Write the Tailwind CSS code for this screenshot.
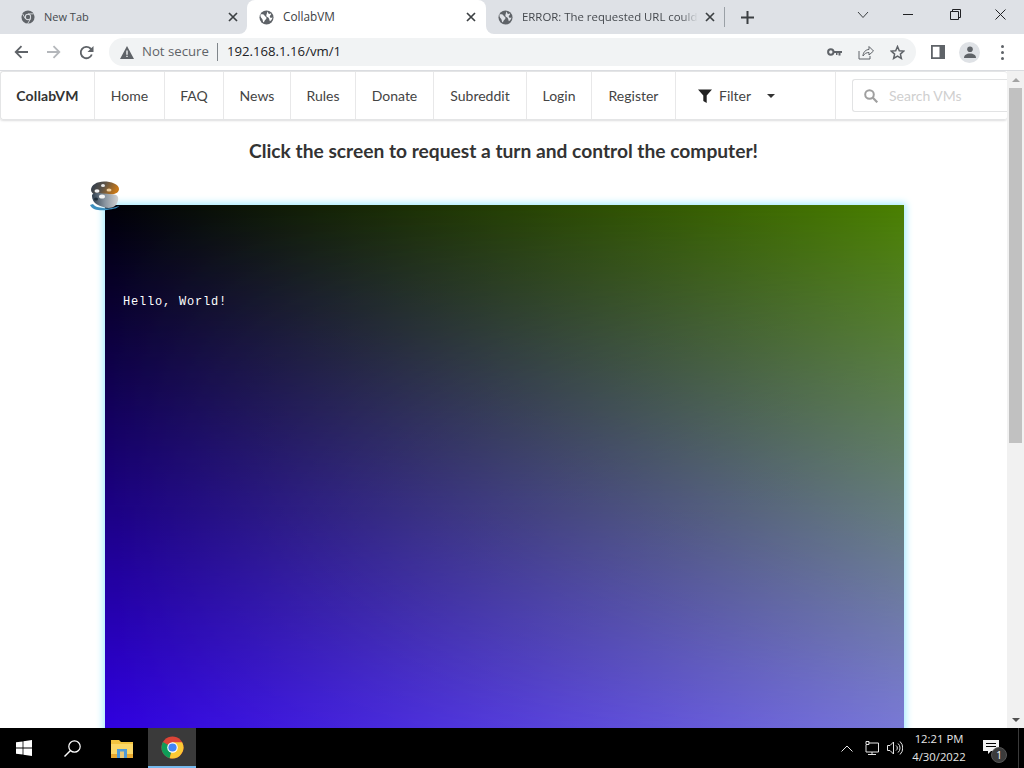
<!doctype html>
<html lang="en">
<head>
<meta charset="utf-8">
<title>CollabVM</title>
<script src="https://cdn.jsdelivr.net/npm/@tailwindcss/browser@4"></script>
</head>
<body class="m-0 overflow-hidden bg-white">
<div class="flex h-[768px] w-[1024px] flex-col overflow-hidden font-['Open_Sans',sans-serif]">

  <!-- Tab strip -->
  <div class="flex h-[34px] shrink-0 items-center bg-[#dee1e6] text-[#45494e]">
    <div class="flex h-full w-[247px] items-center pl-[21px] pr-[9px]">
      <svg class="h-[14px] w-[14px] shrink-0" viewBox="0 0 16 16"><circle cx="8" cy="8" r="7.5" fill="#5f6368"/><circle cx="8" cy="8" r="3.6" fill="#dee1e6"/><circle cx="8" cy="8" r="2.5" fill="#5f6368"/><path d="M8 4.4h6.6M5 10l-3.2-5.6M11 10l-3.4 5.6" stroke="#dee1e6" stroke-width="1"/></svg>
      <span class="ml-[9px] flex-1 text-[11px]">New Tab</span>
      <svg class="h-[10px] w-[10px]" viewBox="0 0 10 10"><path d="M1 1l8 8M9 1l-8 8" stroke="#3c4043" stroke-width="1.7"/></svg>
    </div>
    <div class="relative flex h-[34px] w-[239px] items-center self-end rounded-t-[8px] bg-white pl-[12px] pr-[10px] text-[#3c4043]">
      <div class="absolute bottom-0 -left-[8px] h-[8px] w-[8px] bg-white"><div class="h-full w-full rounded-br-[8px] bg-[#dee1e6]"></div></div>
      <div class="absolute -right-[8px] bottom-0 h-[8px] w-[8px] bg-white"><div class="h-full w-full rounded-bl-[8px] bg-[#dee1e6]"></div></div>
      <svg class="h-[15px] w-[15px] shrink-0" viewBox="0 0 16 16"><circle cx="8" cy="8" r="7.5" fill="#5f6368"/><path d="M2.5 4.5c2 0 3 .5 3.5 1.500s2 1 2 2.500-1.500 1.500-2 3-1 1.500-1.500 1.500c-.5-1.500-.5-3-1.500-4s-1.500-2-1.500-4.500zM9 1.500c1 1 .5 2 1.500 2.500s1.500-.5 2.500 0c0 1.500-1.500 1.500-1.500 3s1.500 1.500 3 1c-.5 2-2 3.500-3 4-.5-2-.5-3.500-2.500-4.500S8 5 9 1.500z" fill="#fff"/></svg>
      <span class="ml-[9px] flex-1 text-[11.8px]">CollabVM</span>
      <svg class="h-[10px] w-[10px]" viewBox="0 0 10 10"><path d="M1 1l8 8M9 1l-8 8" stroke="#3c4043" stroke-width="1.7"/></svg>
    </div>
    <div class="flex h-full w-[238px] items-center pl-[12px] pr-[1px]">
      <svg class="h-[15px] w-[15px] shrink-0" viewBox="0 0 16 16"><circle cx="8" cy="8" r="7.5" fill="#5f6368"/><path d="M2.5 4.5c2 0 3 .5 3.500 1.500s2 1 2 2.500-1.500 1.500-2 3-1 1.500-1.500 1.500c-.5-1.500-.5-3-1.500-4s-1.500-2-1.500-4.500zM9 1.500c1 1 .5 2 1.500 2.500s1.500-.5 2.500 0c0 1.500-1.500 1.500-1.500 3s1.500 1.500 3 1c-.5 2-2 3.500-3 4-.5-2-.5-3.500-2.500-4.500S8 5 9 1.500z" fill="#dee1e6"/></svg>
      <span class="ml-[9px] w-[176px] text-[11.4px] whitespace-nowrap [mask-image:linear-gradient(to_right,black_90%,transparent)]">ERROR: The requested URL could</span>
      <svg class="ml-[7px] h-[10px] w-[10px] shrink-0" viewBox="0 0 10 10"><path d="M1 1l8 8M9 1l-8 8" stroke="#3c4043" stroke-width="1.7"/></svg>
    </div>
    <div class="h-[20px] w-px bg-[#9aa0a6]"></div>
    <svg class="ml-[16px] h-[13px] w-[13px]" viewBox="0 0 13 13"><path d="M6.500 0v13M0 6.500h13" stroke="#3c4043" stroke-width="2"/></svg>
    <svg class="ml-[103px] -mt-[5px] h-[8px] w-[12px]" viewBox="0 0 12 8"><path d="M1 1l5 5.500L11 1" fill="none" stroke="#3c4043" stroke-width="1"/></svg>
    <div class="ml-[34px] -mt-[5px] h-px w-[10px] bg-[#202124]"></div>
    <svg class="ml-[37px] -mt-[5px] h-[11px] w-[11px]" viewBox="0 0 11 11"><path d="M.5 2.500h8v8h-8zM2.500 2.500v-2h8v8h-2" fill="none" stroke="#202124" stroke-width="1"/></svg>
    <svg class="ml-[34px] -mt-[5px] h-[11px] w-[11px]" viewBox="0 0 11 11"><path d="M.5.500l10 10M10.500.500l-10 10" stroke="#202124" stroke-width="1"/></svg>
  </div>

  <!-- Toolbar -->
  <div class="flex h-[37px] shrink-0 items-center border-b border-[#dadce0] bg-white">
    <svg class="ml-[14px] h-[14px] w-[14px]" viewBox="0 0 14 14"><path d="M14 7H2M7.500 1.200L1.700 7l5.800 5.800" fill="none" stroke="#5f6368" stroke-width="1.800"/></svg>
    <svg class="ml-[19px] h-[14px] w-[14px]" viewBox="0 0 14 14"><path d="M0 7h12M6.500 1.200L12.300 7l-5.800 5.800" fill="none" stroke="#b4b7bb" stroke-width="1.800"/></svg>
    <svg class="ml-[18px] h-[15px] w-[15px]" viewBox="0 0 15 15"><path d="M12.800 9.500A5.700 5.700 0 1 1 11.500 3.500L13.500 5.500" fill="none" stroke="#5f6368" stroke-width="1.800"/><path d="M14.500 1v6h-6z" fill="#5f6368"/></svg>
    <div class="ml-[15px] flex h-[28px] w-[807px] items-center rounded-full bg-[#f1f3f4] pl-[11px] text-[#5f6368]">
      <svg class="h-[13px] w-[14px]" viewBox="0 0 14 13"><path fill-rule="evenodd" d="M7 0l7 13H0zM6.300 4.500v4.200h1.400V4.500zM6.300 9.700v1.400h1.400V9.700z" fill="#5f6368"/></svg>
      <span class="ml-[8px] text-[13.2px]">Not secure</span>
      <div class="ml-[8px] h-[18px] w-px bg-[#80868b]"></div>
      <span class="ml-[9px] text-[13.2px] text-[#202124]">192.168.1.16/vm/1</span>
      <div class="ml-auto flex items-center pr-[11px]">
        <svg class="h-[9px] w-[15px]" viewBox="0 0 15 9"><circle cx="3.800" cy="4" r="2.700" fill="none" stroke="#5f6368" stroke-width="2"/><path d="M6 3h9v2h-1.500v2.500h-2V5h-1v2H9V5H6z" fill="#5f6368"/></svg>
        <svg class="ml-[16px] h-[16px] w-[16px]" viewBox="0 0 16 16"><path d="M1 7v8h11v-3" fill="none" stroke="#5f6368" stroke-width="1"/><path d="M5 12c0-4 3-6.500 6-6.500V2.500l4.500 4.500L11 11V8.500c-2.500 0-4.500 1-6 3.500z" fill="none" stroke="#5f6368" stroke-width="1"/></svg>
        <svg class="ml-[16px] h-[15px] w-[15px]" viewBox="0 0 15 15"><path d="M7.500 1.500l1.800 4.200 4.500.4-3.400 3 1 4.400-3.900-2.300-3.900 2.300 1-4.400-3.400-3 4.500-.4z" fill="none" stroke="#5f6368" stroke-width="1.500"/></svg>
      </div>
    </div>
    <svg class="ml-[15px] h-[14px] w-[14px]" viewBox="0 0 14 14"><path fill-rule="evenodd" d="M0 0h14v14H0zM1.800 1.800v10.400H8.500V1.800z" fill="#5f6368"/></svg>
    <div class="ml-[14px] flex h-[21px] w-[21px] items-center justify-center rounded-full bg-[#dfe2e6]">
      <svg class="h-[12px] w-[12px]" viewBox="0 0 12 12"><circle cx="6" cy="3.200" r="2.800" fill="#5f6368"/><path d="M0 12c0-3 2.500-4.500 6-4.500s6 1.500 6 4.500z" fill="#5f6368"/></svg>
    </div>
    <div class="ml-[21px] flex flex-col gap-[3px]">
      <div class="h-[3px] w-[3px] rounded-full bg-[#5f6368]"></div>
      <div class="h-[3px] w-[3px] rounded-full bg-[#5f6368]"></div>
      <div class="h-[3px] w-[3px] rounded-full bg-[#5f6368]"></div>
    </div>
  </div>

  <!-- Viewport -->
  <div class="flex min-h-0 flex-1">
    <main class="min-w-0 flex-1 overflow-hidden bg-white font-['Lato',sans-serif] text-[#444]">
      <nav class="flex h-[49px] items-stretch rounded-[3px] border-y border-l border-[#e4e5e6] text-[14px] shadow-[0_1px_2px_rgba(34,36,38,0.15)]">
        <a class="flex w-[94px] items-center justify-center border-r border-[#e8e8e9] tracking-[0.15px] font-bold text-[#333]">CollabVM</a>
        <a class="flex w-[70px] items-center justify-center border-r border-[#e8e8e9]">Home</a>
        <a class="flex w-[59px] items-center justify-center border-r border-[#e8e8e9]">FAQ</a>
        <a class="flex w-[67px] items-center justify-center border-r border-[#e8e8e9]">News</a>
        <a class="flex w-[65px] items-center justify-center border-r border-[#e8e8e9]">Rules</a>
        <a class="flex w-[78px] items-center justify-center border-r border-[#e8e8e9]">Donate</a>
        <a class="flex w-[93px] items-center justify-center border-r border-[#e8e8e9]">Subreddit</a>
        <a class="flex w-[65px] items-center justify-center border-r border-[#e8e8e9]">Login</a>
        <a class="flex w-[84px] items-center justify-center border-r border-[#e8e8e9]">Register</a>
        <div class="flex w-[160px] items-center border-r border-[#e8e8e9] pl-[22px]">
          <svg class="h-[14px] w-[14px]" viewBox="0 0 14 14"><path d="M0 .500h14L8.700 6.500V14l-3.400-2V6.500z" fill="#222"/></svg>
          <span class="ml-[7px]">Filter</span>
          <svg class="ml-[16px] h-[4px] w-[8px]" viewBox="0 0 8 4"><path d="M0 0h8L4 4z" fill="#333"/></svg>
        </div>
        <div class="ml-[16px] flex h-[33px] flex-1 items-center self-center rounded-l-[3px] border-y border-l border-[#e2e3e4] pl-[11px] text-[#cfcfcf]">
          <svg class="h-[14px] w-[14px]" viewBox="0 0 14 14"><circle cx="5.500" cy="5.500" r="4.300" fill="none" stroke="#9f9f9f" stroke-width="2"/><path d="M8.800 8.800L13.300 13.300" stroke="#9f9f9f" stroke-width="2.200"/></svg>
          <span class="ml-[11px]">Search VMs</span>
        </div>
      </nav>
      <h1 class="mt-[19px] text-center text-[19.2px] leading-[24px] font-bold text-[#333]">Click the screen to request a turn and control the computer!</h1>

      <!-- VM screen -->
      <div class="relative mt-[42px] ml-[105px] h-[600px] w-[799px] bg-[linear-gradient(to_right,#000008,#4a8000)] shadow-[0_0_7px_2px_#a5ecff]">
        <div class="absolute inset-0 bg-[linear-gradient(to_right,#3600ff,#8078f6)] [mask-image:linear-gradient(to_bottom,transparent,black)]"></div>
        <span class="absolute top-[90px] left-[18px] font-['Liberation_Mono',monospace] text-[12px] leading-[14px] tracking-[0.8px] text-white">Hello, World!</span>
        <svg class="absolute -top-[24px] -left-[16px] h-[31px] w-[31px]" viewBox="0 0 31 31">
          <defs>
            <linearGradient id="pal" x1="0" y1="0" x2="1" y2="0.300"><stop offset="0" stop-color="#27384c"/><stop offset=".5" stop-color="#5c5348"/><stop offset="1" stop-color="#c87818"/></linearGradient>
            <linearGradient id="low" x1="0" y1="0" x2="1" y2="0"><stop offset="0" stop-color="#30404f"/><stop offset=".5" stop-color="#8a95a0"/><stop offset="1" stop-color="#d2d2d2"/></linearGradient>
          </defs>
          <path d="M1 24c2 5 10 6 17 5s11-2 12-4c-6 2-11 3-16 2-4-.5-8-1-10-4z" fill="#3d8fbf"/>
          <path d="M2 9C2 4 8 .5 15 .5S30 3 30 8c0 3-3 5-7 5.500-3 .3-6 .5-6 2-5 0-15-1-15-6.500z" fill="url(#pal)"/>
          <path d="M3 15c0-3 4-3.500 8-3s10 1 14 1.500c3 .5 5 2 4 6s-3 6-6 7c-5 1.500-11-1-15-3-3-1.500-5-5-5-8.500z" fill="url(#low)"/>
          <ellipse cx="14" cy="4.500" rx="2" ry="1.500" fill="#e8e8e8"/>
          <ellipse cx="8" cy="10" rx="2.500" ry="1.800" fill="#f4f4f4"/>
          <ellipse cx="20" cy="9" rx="2.500" ry="1.500" fill="#f0d0a0"/>
          <ellipse cx="13" cy="15.500" rx="3" ry="2" fill="#f4f4f4"/>
          <ellipse cx="7" cy="18" rx="2" ry="1.500" fill="#1e2c38"/>
        </svg>
      </div>
    </main>

    <!-- Scrollbar -->
    <div class="flex w-[17px] shrink-0 flex-col items-center bg-[#f1f1f1]">
      <div class="flex h-[17px] w-full items-center justify-center">
        <svg class="h-[4px] w-[8px]" viewBox="0 0 8 4"><path d="M4 0l4 4H0z" fill="#a3a3a3"/></svg>
      </div>
      <div class="h-[355px] w-[13px] bg-[#c1c1c1]"></div>
      <div class="mt-auto flex h-[17px] w-full items-center justify-center">
        <svg class="h-[4px] w-[8px]" viewBox="0 0 8 4"><path d="M0 0h8L4 4z" fill="#505050"/></svg>
      </div>
    </div>
  </div>

  <!-- Taskbar -->
  <div class="flex h-[40px] shrink-0 items-center bg-black text-white">
    <div class="flex h-full w-[48px] items-center justify-center">
      <svg class="h-[16px] w-[16px]" viewBox="0 0 16 16"><path d="M0 2.300l6.600-.9v6.200H0zM7.400 1.300L16 0v7.600H7.400zM0 8.400h6.600v6.200L0 13.700zM7.400 8.400H16V16l-8.600-1.300z" fill="#fff"/></svg>
    </div>
    <div class="flex h-full w-[48px] items-center justify-center">
      <svg class="h-[17px] w-[17px]" viewBox="0 0 17 17"><circle cx="10.500" cy="6.500" r="5.700" fill="none" stroke="#fff" stroke-width="1.200"/><path d="M6.500 10.500L.5 16.500" stroke="#fff" stroke-width="1.400"/></svg>
    </div>
    <div class="flex h-full w-[52px] items-center justify-center">
      <svg class="h-[19px] w-[22px]" viewBox="0 0 22 19"><path d="M0 1h8l2 2h12v15H0z" fill="#f3c440"/><path d="M0 5h22v13H0z" fill="#fbd868"/><path d="M0 15h8v4H0zM14 15h8v4h-8z" fill="#e8a930"/><path d="M6 10h10v9H6z" fill="#4f9ad8"/><path d="M9 12.500h4V19H9z" fill="#e8c878"/></svg>
    </div>
    <div class="flex h-full w-[48px] items-center justify-center border-b-[2px] border-[#76b9ed] bg-[#3a3a3a]">
      <svg class="h-[23px] w-[23px]" viewBox="0 0 24 24">
        <circle cx="12" cy="12" r="11.500" fill="#db4437"/>
        <path d="M12 12L2.040 6.250A11.500 11.500 0 0 0 9 23.100z" fill="#0f9d58"/>
        <path d="M12 6.500h10A11.500 11.500 0 0 1 9 23.100L12 12z" fill="#fcc934"/>
        <circle cx="12" cy="12" r="5.500" fill="#fff"/>
        <circle cx="12" cy="12" r="4.300" fill="#4285f4"/>
      </svg>
    </div>
    <div class="ml-auto flex h-full items-center">
      <svg class="h-[7px] w-[12px]" viewBox="0 0 12 7"><path d="M.5 6.500L6 1l5.500 5.500" fill="none" stroke="#e6e6e6" stroke-width="1"/></svg>
      <svg class="ml-[10px] h-[14px] w-[16px]" viewBox="0 0 16 14"><path d="M3 3.500V.500h3v3zM5.500 2H15.500v9H3V4M9 11v2.500M5 13.500h8" fill="none" stroke="#e6e6e6" stroke-width="1"/></svg>
      <svg class="ml-[8px] h-[14px] w-[16px]" viewBox="0 0 16 14"><path d="M.5 4.500h2.500L6.500 1v12L3 9.500H.5zM9 4.500a3 3 0 0 1 0 5M11 2.500a6 6 0 0 1 0 9M13 .500a9 9 0 0 1 0 13" fill="none" stroke="#e6e6e6" stroke-width="1"/></svg>
      <div class="flex w-[72px] flex-col items-center text-[11.3px] leading-[18px] text-[#e6e6e6]">
        <span>12:21 PM</span>
        <span>4/30/2022</span>
      </div>
      <div class="relative ml-[8px] mr-[5px] h-[40px] w-[36px] border-r border-[#3a3a3a]">
        <svg class="absolute top-[12px] left-[0px] h-[15px] w-[16px]" viewBox="0 0 16 15"><path fill-rule="evenodd" d="M0 0h16v11H8l-3 3v-3H0zM3 3v1h10V3zM3 6v1h10V6z" fill="#f2f2f2"/></svg>
        <div class="absolute top-[19px] left-[8px] flex h-[16px] w-[16px] items-center justify-center rounded-full border border-[#555] bg-[#3b3b3b] text-[10px] leading-none text-white">1</div>
      </div>
    </div>
  </div>
</div>
</body>
</html>
